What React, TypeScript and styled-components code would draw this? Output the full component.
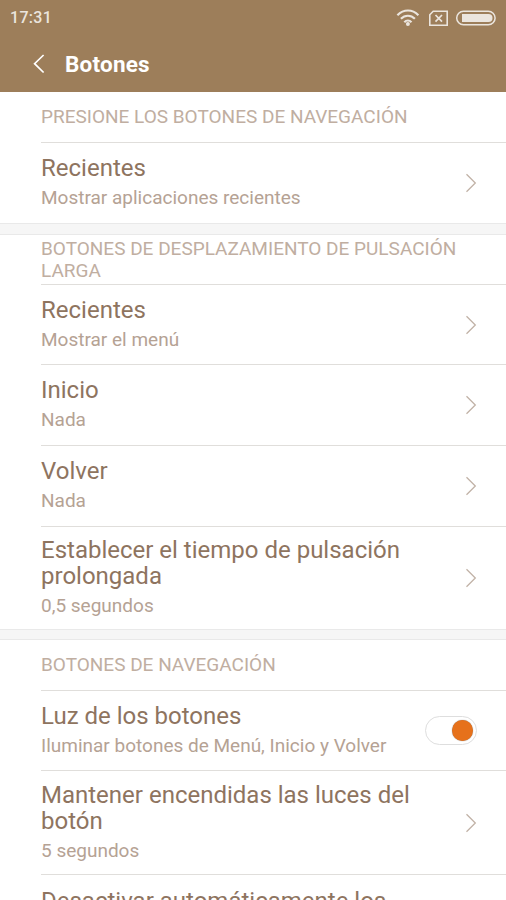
import React from 'react';
import styled, { createGlobalStyle } from 'styled-components';

const Global = createGlobalStyle`
  * { box-sizing: border-box; }
  html, body { margin: 0; height: 900px; overflow: hidden; background: #fff; }
`;

const Screen = styled.div`
  width: 506px;
  height: 900px;
  overflow: hidden;
  background: #fff;
  font-family: Roboto, sans-serif;
`;

const TopBar = styled.header`
  height: 92px;
  background: #9d7e5a;
  color: #fff;
`;

const StatusBar = styled.div`
  height: 36px;
  padding: 0 8px 0 10px;
  display: flex;
  align-items: center;
  justify-content: space-between;
  color: #ebe5de;
`;

const Clock = styled.span`
  font-size: 16px;
  font-weight: 500;
  line-height: 36px;
  letter-spacing: 0.3px;
`;

const TitleRow = styled.div`
  height: 56px;
  display: flex;
  align-items: center;
  padding-left: 33px;
  gap: 20px;
`;

const Title = styled.h1`
  margin: 0;
  font-size: 22.5px;
  font-weight: 700;
  line-height: 56px;
  letter-spacing: 0.2px;
`;

const SectionHeader = styled.div<{ $h: number }>`
  height: ${p => p.$h}px;
  margin-left: 41px;
  padding-right: 29px;
  display: flex;
  align-items: center;
  border-bottom: 1px solid #e0dedb;
  color: #c0aea1;
  font-size: 19px;
  line-height: 22px;
`;

const Row = styled.div<{ $h: number; $last?: boolean }>`
  height: ${p => p.$h}px;
  margin-left: 41px;
  padding-right: 29px;
  display: flex;
  align-items: center;
  justify-content: space-between;
  border-bottom: ${p => (p.$last ? 'none' : '1px solid #e0dedb')};
`;

const Name = styled.div`
  color: #8e745f;
  font-size: 24px;
  line-height: 26px;
  white-space: pre;
`;

const Detail = styled.div`
  margin-top: 4px;
  color: #b5a294;
  font-size: 19px;
  line-height: 26px;
`;

const Gap = styled.div<{ $h: number }>`
  height: ${p => p.$h}px;
  background: #f6f6f6;
  border: solid #e9e9e9;
  border-width: 1px 0;
`;

const Switch = styled.div`
  width: 52px;
  height: 29px;
  border: 1px solid #dedede;
  border-radius: 15px;
  display: flex;
  align-items: center;
  justify-content: flex-end;
  padding-right: 3px;
`;

const Knob = styled.div`
  width: 21px;
  height: 21px;
  border-radius: 50%;
  background: #e6711b;
  box-shadow: 0 0 1px #77706b;
`;

const Chevron = () => (
  <svg width="12" height="20" viewBox="0 0 12 20" fill="none" stroke="#c1b2a6" strokeWidth="1.3">
    <path d="M1.5 1.3 10.3 10 1.5 18.7" />
  </svg>
);

const BackIcon = () => (
  <svg width="12" height="20" viewBox="0 0 12 20" fill="none" stroke="#fff" strokeWidth="1.7">
    <path d="M10.6 1 1.6 9.7 10.6 18.5" />
  </svg>
);

const StatusGlyphs = () => (
  <svg width="102" height="20" viewBox="0 0 102 20" fill="none" stroke="#ebe5de">
    <path d="M1.4 7.2C7.6.9 16.3.9 22.4 7.2M4.9 10.8C8.9 6.7 14.9 6.7 18.9 10.8M8.3 14.2C10.4 12.1 13.4 12.1 15.5 14.2" strokeWidth="2.2" />
    <circle cx="11.9" cy="16" r="2" fill="#ebe5de" stroke="none" />
    <path d="M37.2 3.2H51.2V17.2H33.8V6.8Z" strokeWidth="1.6" />
    <path d="M39.5 7 46 13.6M46 7 39.5 13.6" strokeWidth="1.7" />
    <rect x="60.7" y="3.2" width="38.4" height="13.6" rx="6.8" strokeWidth="1.5" />
    <path d="M66 6H92.5A4 4 0 0 1 92.5 14H66Z" fill="#ebe5de" stroke="none" />
  </svg>
);

export default function App() {
  return (
    <Screen>
      <Global />
      <TopBar>
        <StatusBar><Clock>17:31</Clock><StatusGlyphs /></StatusBar>
        <TitleRow><BackIcon /><Title>Botones</Title></TitleRow>
      </TopBar>
      <SectionHeader $h={51}>PRESIONE LOS BOTONES DE NAVEGACIÓN</SectionHeader>
      <Row $h={80} $last><div><Name>Recientes</Name><Detail>Mostrar aplicaciones recientes</Detail></div><Chevron /></Row>
      <Gap $h={12} />
      <SectionHeader $h={50}>BOTONES DE DESPLAZAMIENTO DE PULSACIÓN LARGA</SectionHeader>
      <Row $h={80}><div><Name>Recientes</Name><Detail>Mostrar el menú</Detail></div><Chevron /></Row>
      <Row $h={81}><div><Name>Inicio</Name><Detail>Nada</Detail></div><Chevron /></Row>
      <Row $h={81}><div><Name>Volver</Name><Detail>Nada</Detail></div><Chevron /></Row>
      <Row $h={102} $last><div><Name>{'Establecer el tiempo de pulsación\nprolongada'}</Name><Detail>0,5 segundos</Detail></div><Chevron /></Row>
      <Gap $h={11} />
      <SectionHeader $h={51}>BOTONES DE NAVEGACIÓN</SectionHeader>
      <Row $h={80}><div><Name>Luz de los botones</Name><Detail>Iluminar botones de Menú, Inicio y Volver</Detail></div><Switch><Knob /></Switch></Row>
      <Row $h={104}><div><Name>{'Mantener encendidas las luces del\nbotón'}</Name><Detail>5 segundos</Detail></div><Chevron /></Row>
      <Row $h={52} $last><Name>Desactivar automáticamente los</Name></Row>
    </Screen>
  );
}
